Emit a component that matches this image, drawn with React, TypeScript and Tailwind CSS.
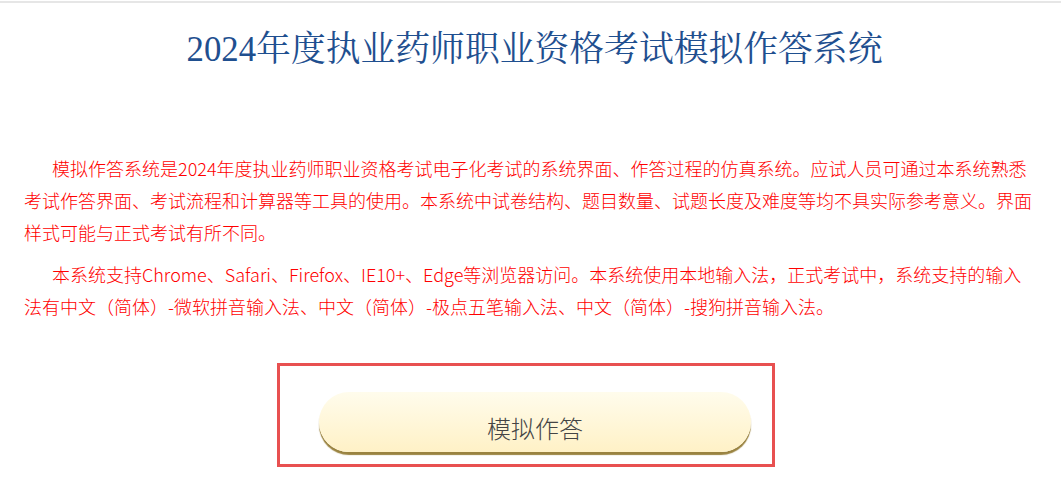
export default function App() {
  const sans = { fontFamily: '"Noto Sans CJK SC", "Noto Sans", sans-serif' };

  return (
    <div className="w-[1061px] h-[487px] bg-white overflow-hidden" style={sans}>
      {/* top rule */}
      <div className="pt-px">
        <div className="h-[2px] bg-[#e6e6e6]" />
      </div>

      <h1
        className="mt-[27px] pl-2 text-center text-[34.8px] leading-[40px] font-normal text-[#1f4f8f]"
        style={{ fontFamily: '"Liberation Serif", "Noto Serif CJK SC", "Noto Sans CJK SC", serif' }}
      >
        2024年度执业药师职业资格考试模拟作答系统
      </h1>

      <div className="mt-[82px] px-6 text-[18px] leading-[32px] font-light text-[#ff0000]">
        <p className="indent-[28px] mb-[10px]">
          模拟作答系统是2024年度执业药师职业资格考试电子化考试的系统界面、作答过程的仿真系统。应试人员可通过本系统熟悉考试作答界面、考试流程和计算器等工具的使用。本系统中试卷结构、题目数量、试题长度及难度等均不具实际参考意义。界面样式可能与正式考试有所不同。
        </p>
        <p className="indent-[28px]">
          本系统支持Chrome、Safari、Firefox、IE10+、Edge等浏览器访问。本系统使用本地输入法，正式考试中，系统支持的输入法有中文（简体）-微软拼音输入法、中文（简体）-极点五笔输入法、中文（简体）-搜狗拼音输入法。
        </p>
      </div>

      <div className="mt-[41px] ml-[277px] w-[498px] h-[104px] border-[3px] border-[#e85050]">
        <button
          className="mt-[26px] ml-[39px] w-[432px] h-[60px] rounded-full flex items-center justify-center pt-[12px] bg-gradient-to-b from-[#fffcec] to-[#fff1c6] shadow-[0_3px_1px_#9a8340] text-[24px] font-light text-[#444]"
          style={sans}
        >
          模拟作答
        </button>
      </div>
    </div>
  );
}
